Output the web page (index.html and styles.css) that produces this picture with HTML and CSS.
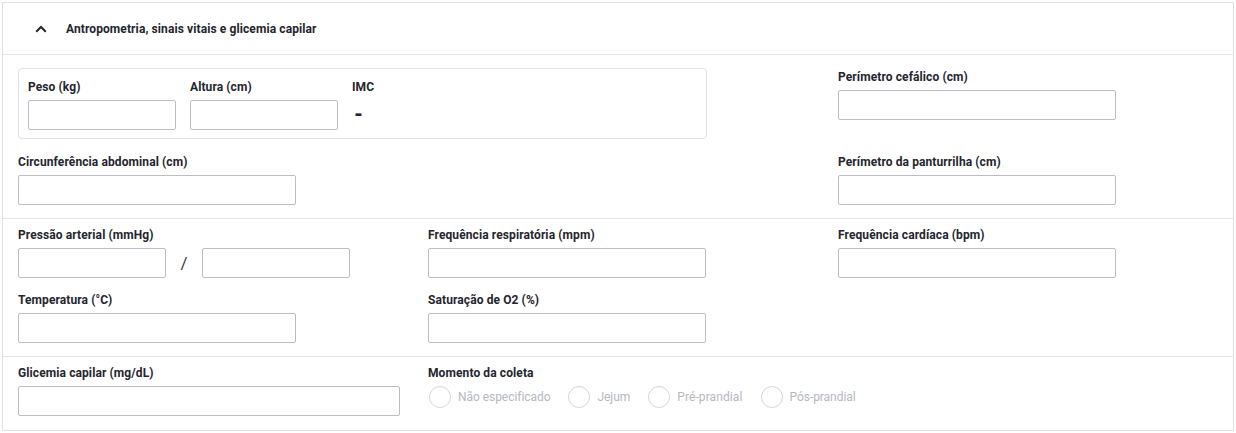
FILE: index.html
```html
<!DOCTYPE html>
<html lang="pt-BR">
<head>
<meta charset="utf-8">
<title>Antropometria</title>
<link rel="stylesheet" href="styles.css">
</head>
<body>
<div class="panel">
  <div class="header">
    <svg class="chev" width="12" height="8" viewBox="0 0 12 8"><polyline points="1.2,6.8 6,2 10.8,6.8" fill="none" stroke="#24252e" stroke-width="2"/></svg>
    <span class="title">Antropometria, sinais vitais e glicemia capilar</span>
  </div>

  <div class="section s1">
    <div class="cell span2">
      <div class="box">
        <div class="field"><label>Peso (kg)</label><div class="input w148"></div></div>
        <div class="field"><label>Altura (cm)</label><div class="input w148"></div></div>
        <div class="field"><label>IMC</label><div class="imc">-</div></div>
      </div>
    </div>
    <div class="cell shift"><label>Perímetro cefálico (cm)</label><div class="input"></div></div>
    <div class="cell"><label>Circunferência abdominal (cm)</label><div class="input"></div></div>
    <div class="cell"></div>
    <div class="cell"><label>Perímetro da panturrilha (cm)</label><div class="input"></div></div>
  </div>

  <div class="section s2">
    <div class="cell">
      <label>Pressão arterial (mmHg)</label>
      <div class="pa">
        <div class="input w148"></div>
        <span class="slash">/</span>
        <div class="input w148"></div>
      </div>
    </div>
    <div class="cell"><label>Frequência respiratória (mpm)</label><div class="input"></div></div>
    <div class="cell"><label>Frequência cardíaca (bpm)</label><div class="input"></div></div>
    <div class="cell"><label>Temperatura (°C)</label><div class="input"></div></div>
    <div class="cell"><label>Saturação de O2 (%)</label><div class="input"></div></div>
    <div class="cell"></div>
  </div>

  <div class="section s3">
    <div class="cell"><label>Glicemia capilar (mg/dL)</label><div class="input wide"></div></div>
    <div class="cell span2">
      <label>Momento da coleta</label>
      <div class="radios">
        <span class="radio"><span class="circle"></span>Não especificado</span>
        <span class="radio"><span class="circle"></span>Jejum</span>
        <span class="radio"><span class="circle"></span>Pré-prandial</span>
        <span class="radio"><span class="circle"></span>Pós-prandial</span>
      </div>
    </div>
  </div>
</div>
</body>
</html>
```

FILE: styles.css
```css
* { box-sizing: border-box; }
html, body { margin: 0; padding: 0; background: #fff; }
body {
  font-family: "Roboto", "Liberation Sans", sans-serif;
  color: #24252e;
  font-size: 12px;
  padding: 2px;
}
.panel {
  width: 1232px;
  height: 429px;
  border: 1px solid #dfdfe6;
}
.header {
  height: 52px;
  border-bottom: 1px solid #e3e3e9;
  display: flex;
  align-items: center;
  padding-left: 32px;
}
.chev { display: block; margin-right: 19px; }
.title { font-weight: 700; font-size: 12px; letter-spacing: 0.1px; }
.section {
  display: grid;
  grid-template-columns: 410px 410px 410px;
  border-bottom: 1px solid #e3e3e9;
}
.section:last-child { border-bottom: none; }
.s1 { padding: 13px 0 13px; row-gap: 15px; height: 164px; }
.s2 { padding: 8px 0 13px; row-gap: 14px; height: 138px; }
.s3 { padding: 8px 0 14px; height: 72px; }
.cell { padding-left: 15px; }
.span2 { grid-column: span 2; }
.shift { margin-top: 1px; }
label {
  display: block;
  font-weight: 700;
  font-size: 12px;
  line-height: 16px;
  margin-bottom: 5px;
  white-space: nowrap;
  letter-spacing: 0.1px;
}
.input {
  width: 278px;
  height: 30px;
  border: 1px solid #bbbcc7;
  border-radius: 2px;
  background: #fff;
}
.w148 { width: 148px; }
.wide { width: 382px; }
.box {
  width: 689px;
  height: 71px;
  border: 1px solid #e1e1e8;
  border-radius: 4px;
  padding: 10px 9px 8px;
  display: flex;
  gap: 14px;
}
.imc {
  height: 28px;
  display: flex;
  align-items: center;
  font-weight: 900;
  font-size: 20px;
  padding-left: 2px;
}
.pa { display: flex; align-items: center; }
.slash {
  width: 36px;
  text-align: center;
  font-size: 17px;
  color: #3a3b45;
}
.radios {
  display: flex;
  align-items: center;
  padding-left: 1px;
}
.radio {
  display: flex;
  align-items: center;
  color: #b6b7c2;
  font-size: 12px;
  letter-spacing: -0.05px;
  margin-right: 18px;
}
.radio:nth-child(3) { letter-spacing: 0.1px; }
.circle {
  width: 22px;
  height: 22px;
  border: 1px solid #d4d5dd;
  border-radius: 50%;
  margin-right: 7px;
}
```
